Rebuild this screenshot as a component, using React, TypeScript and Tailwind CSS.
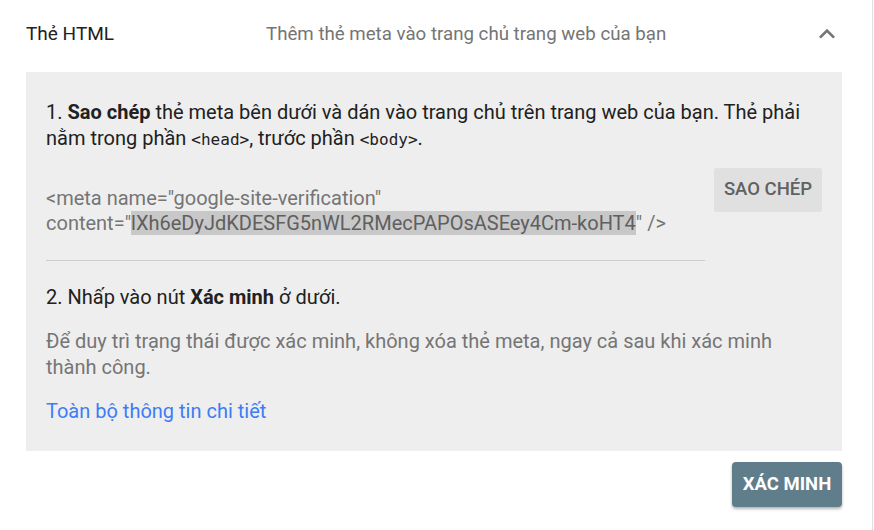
const font = { fontFamily: "Roboto, 'Noto Sans', Arial, sans-serif" };

function ExpandLess() {
  return (
    <svg viewBox="0 0 24 24" className="w-8 h-8 mr-[-1px] text-[#757575]" fill="currentColor">
      <path d="M12 8l-6 6 1.41 1.41L12 10.83l4.59 4.58L18 14z" />
    </svg>
  );
}

export default function App() {
  return (
    <div className="w-[874px] h-[530px] bg-white overflow-hidden" style={font}>
      <div className="w-[873px] h-full border-r border-[#e0e0e0] pl-[26px] pr-[30px]">
        {/* header */}
        <div className="flex items-center h-[68px]">
          <div className="w-[240px] text-[19px] text-[#212121]">Thẻ HTML</div>
          <div className="flex-1 text-[18.7px] text-[#757575]">Thêm thẻ meta vào trang chủ trang web của bạn</div>
          <ExpandLess />
        </div>

        {/* panel */}
        <div className="mt-[4px] bg-[#eeeeee] pl-[20px] pr-[20px] pt-[27px] pb-[27px]">
          <p className="text-[20px] leading-[26px] text-[#212121]">
            1. <b className="font-bold">Sao chép</b> thẻ meta bên dưới và dán vào trang chủ trên trang web của bạn. Thẻ phải nằm trong phần{' '}
            <code className="font-['DejaVu_Sans_Mono',monospace] text-[16px]">&lt;head&gt;</code>, trước phần{' '}
            <code className="font-['DejaVu_Sans_Mono',monospace] text-[16px]">&lt;body&gt;</code>.
          </p>

          <div className="flex items-start justify-between mt-[15px]">
            <div className="w-[659px] pt-[18px] text-[20px] leading-[25px] text-[#757575]">
              &lt;meta name="google-site-verification"
              <br />
              content="<span className="bg-[#c8c8c8] text-[#5f5f5f]">lXh6eDyJdKDESFG5nWL2RMecPAPOsASEey4Cm-koHT4</span>" /&gt;
            </div>
            <button className="w-[108px] h-[44px] rounded-[3px] bg-[#e0e0e0] text-[#616161] text-[18.5px] font-medium uppercase">
              Sao chép
            </button>
          </div>

          <div className="w-[659px] mt-[24px] border-t border-[#cccccc]" />

          <p className="mt-[23px] text-[20px] leading-[26px] text-[#212121]">
            2. Nhấp vào nút <b className="font-bold">Xác minh</b> ở dưới.
          </p>
          <p className="mt-[18px] text-[20px] leading-[26px] text-[#757575]">
            Để duy trì trạng thái được xác minh, không xóa thẻ meta, ngay cả sau khi xác minh thành công.
          </p>
          <a href="#" className="block mt-[18px] text-[20px] leading-[26px] text-[#3d7cf7]">
            Toàn bộ thông tin chi tiết
          </a>
        </div>

        <div className="flex justify-end mt-[11px]">
          <button className="w-[110px] h-[45px] rounded-[4px] bg-[#607d8b] text-white text-[18.5px] font-bold uppercase shadow-[0_2px_3px_rgba(0,0,0,0.3)]">
            Xác minh
          </button>
        </div>
      </div>
    </div>
  );
}
